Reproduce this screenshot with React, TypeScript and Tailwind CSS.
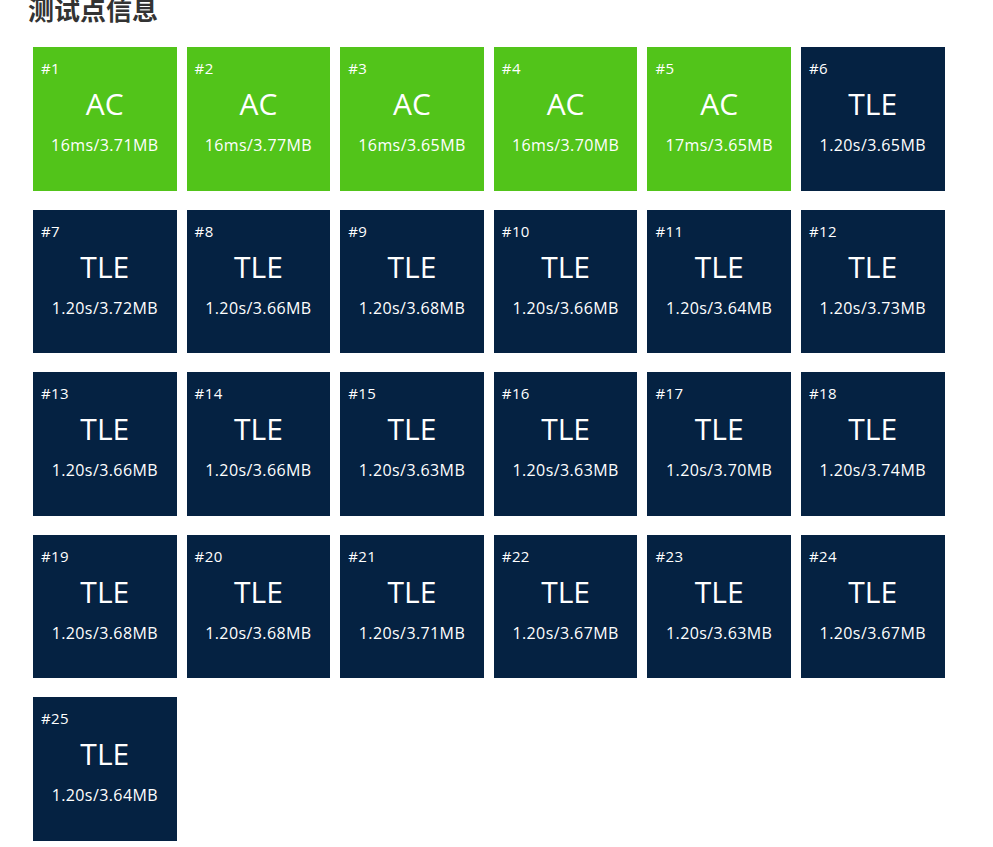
import React from "react";

type Item = { id: number; ac: boolean; time: string; mem: string };

const data: [string, string][] = [
  ["16ms", "3.71MB"],
  ["16ms", "3.77MB"],
  ["16ms", "3.65MB"],
  ["16ms", "3.70MB"],
  ["17ms", "3.65MB"],
  ["1.20s", "3.65MB"],
  ["1.20s", "3.72MB"],
  ["1.20s", "3.66MB"],
  ["1.20s", "3.68MB"],
  ["1.20s", "3.66MB"],
  ["1.20s", "3.64MB"],
  ["1.20s", "3.73MB"],
  ["1.20s", "3.66MB"],
  ["1.20s", "3.66MB"],
  ["1.20s", "3.63MB"],
  ["1.20s", "3.63MB"],
  ["1.20s", "3.70MB"],
  ["1.20s", "3.74MB"],
  ["1.20s", "3.68MB"],
  ["1.20s", "3.68MB"],
  ["1.20s", "3.71MB"],
  ["1.20s", "3.67MB"],
  ["1.20s", "3.63MB"],
  ["1.20s", "3.67MB"],
  ["1.20s", "3.64MB"],
];

const items: Item[] = data.map(([t, m], i) => ({
  id: i + 1,
  ac: i < 5,
  time: t,
  mem: m,
}));

function Card({ item }: { item: Item }) {
  return (
    <div
      className={`h-[143.5px] w-[143.6px] pt-[11px] text-white ${
        item.ac ? "bg-[#52c41a]" : "bg-[#052242]"
      }`}
    >
      <div className="pl-2 text-[15px] font-medium leading-[20px] tracking-[0.4px]">
        #{item.id}
      </div>
      <div className="mt-[8px] text-center text-[30px] leading-[36px]">
        {item.ac ? "AC" : "TLE"}
      </div>
      <div className="mt-[11px] text-center text-[16px] font-medium leading-[24px] tracking-[0.4px]">
        {item.time}/{item.mem}
      </div>
    </div>
  );
}

export default function App() {
  return (
    <div
      className="min-h-[847px] w-[993px] overflow-hidden bg-white"
      style={{ fontFamily: '"Open Sans", "Noto Sans CJK SC", sans-serif' }}
    >
      <div className="pl-[28px]">
        <h3
          className="text-[26px] font-bold leading-[18px] text-[#333]"
          style={{ fontFamily: '"Noto Sans CJK SC", sans-serif' }}
        >
          测试点信息
        </h3>
      </div>
      <div className="mt-[29px] grid grid-cols-[repeat(6,143.6px)] gap-x-[10px] gap-y-[19px] pl-[33px]">
        {items.map((it) => (
          <Card key={it.id} item={it} />
        ))}
      </div>
    </div>
  );
}
